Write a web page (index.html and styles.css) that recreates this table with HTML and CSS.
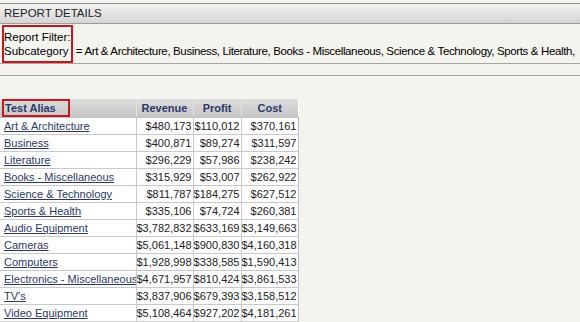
FILE: index.html
```html
<!DOCTYPE html>
<html>
<head>
<meta charset="utf-8">
<link rel="stylesheet" href="styles.css">
</head>
<body>
<div class="page">
  <div class="topline"></div>
  <div class="section-head">REPORT DETAILS</div>
  <div class="filter">
    <span class="filter-box"><span class="filter-line">Report Filter:</span><span class="filter-line">Subcategory</span></span><span class="filter-value"> = Art &amp; Architecture, Business, Literature, Books - Miscellaneous, Science &amp; Technology, Sports &amp; Health,</span>
  </div>
  <div class="spacer"></div>
  <div class="grid-area">
    <table class="grid">
      <colgroup>
        <col class="w-alias"><col class="w-rev"><col class="w-pro"><col class="w-cost">
      </colgroup>
      <thead>
        <tr><th class="alias"><span class="hl2">Test Alias</span></th><th>Revenue</th><th>Profit</th><th>Cost</th></tr>
      </thead>
      <tbody>
        <tr><td><a href="#">Art &amp; Architecture</a></td><td>$480,173</td><td>$110,012</td><td>$370,161</td></tr>
        <tr><td><a href="#">Business</a></td><td>$400,871</td><td>$89,274</td><td>$311,597</td></tr>
        <tr><td><a href="#">Literature</a></td><td>$296,229</td><td>$57,986</td><td>$238,242</td></tr>
        <tr><td><a href="#">Books - Miscellaneous</a></td><td>$315,929</td><td>$53,007</td><td>$262,922</td></tr>
        <tr><td><a href="#">Science &amp; Technology</a></td><td>$811,787</td><td>$184,275</td><td>$627,512</td></tr>
        <tr><td><a href="#">Sports &amp; Health</a></td><td>$335,106</td><td>$74,724</td><td>$260,381</td></tr>
        <tr><td><a href="#">Audio Equipment</a></td><td>$3,782,832</td><td>$633,169</td><td>$3,149,663</td></tr>
        <tr><td><a href="#">Cameras</a></td><td>$5,061,148</td><td>$900,830</td><td>$4,160,318</td></tr>
        <tr><td><a href="#">Computers</a></td><td>$1,928,998</td><td>$338,585</td><td>$1,590,413</td></tr>
        <tr><td><a href="#">Electronics - Miscellaneous</a></td><td>$4,671,957</td><td>$810,424</td><td>$3,861,533</td></tr>
        <tr><td><a href="#">TV's</a></td><td>$3,837,906</td><td>$679,393</td><td>$3,158,512</td></tr>
        <tr><td><a href="#">Video Equipment</a></td><td>$5,108,464</td><td>$927,202</td><td>$4,181,261</td></tr>
      </tbody>
    </table>
  </div>
</div>
</body>
</html>
```
FILE: styles.css
```css
html, body {
  margin: 0;
  padding: 0;
  background: #f4f3ee;
  overflow: hidden;
}
.page {
  width: 580px;
  height: 322px;
  font-family: "Liberation Sans", Arial, sans-serif;
  font-size: 11px;
  color: #000;
}
.topline {
  height: 3px;
  background: #f4f3ee;
  border-bottom: 1px solid #8a8a8a;
}
.section-head {
  height: 19px;
  line-height: 19px;
  padding-left: 4px;
  background: linear-gradient(#f2f2f2, #d5d5d5);
  border-bottom: 1px solid #9c9c9c;
  color: #222;
  font-size: 11.5px;
}
.filter {
  padding: 1px 0 0 2px;
  box-sizing: border-box;
  border-bottom: 1px solid #a6a6a6;
  white-space: nowrap;
  overflow: hidden;
  height: 40px;
  font-size: 11.5px;
}
.filter-box {
  display: inline-block;
  vertical-align: baseline;
  border: 2px solid #c8161d;
  padding: 3px 2px 3px 0;
  width: 65px;
}
.filter-line {
  display: block;
  line-height: 14px;
  height: 14px;
}
.filter-value {
  letter-spacing: -0.36px;
}
.spacer {
  height: 11px;
  border-bottom: 1px solid #a6a6a6;
}
.grid-area {
  padding-top: 23px;
}
.grid {
  border-collapse: collapse;
  background: #fff;
  width: 298px;
  table-layout: fixed;
}
.w-alias { width: 136px; }
.w-rev { width: 57px; }
.w-pro { width: 48px; }
.w-cost { width: 57px; }
.grid th {
  height: 18px;
  padding: 0 1px;
  background: linear-gradient(#dcdcdc, #c6c6c6);
  color: #2c3867;
  font-weight: bold;
  text-align: center;
  border-left: 1px solid #e2e2e2;
  border-bottom: 1px solid #c0c0c0;
}
.grid th.alias {
  text-align: left;
  border-left: none;
  padding-left: 2px;
}
.hl2 {
  display: inline-block;
  vertical-align: middle;
  line-height: 14px;
  padding: 0 12px 0 1px;
  border: 2px solid #c8161d;
}
.grid td {
  height: 16px;
  padding: 0 1px 0 0;
  border: 1px solid #c9c9c9;
  text-align: right;
  color: #222;
  white-space: nowrap;
  overflow: hidden;
}
.grid td:first-child {
  text-align: left;
  border-left: none;
  padding-left: 4px;
}
.grid td:last-child {
  border-right: 1px solid #bdbdbd;
}
.grid td a {
  color: #2c3867;
  text-decoration: underline;
}
```
